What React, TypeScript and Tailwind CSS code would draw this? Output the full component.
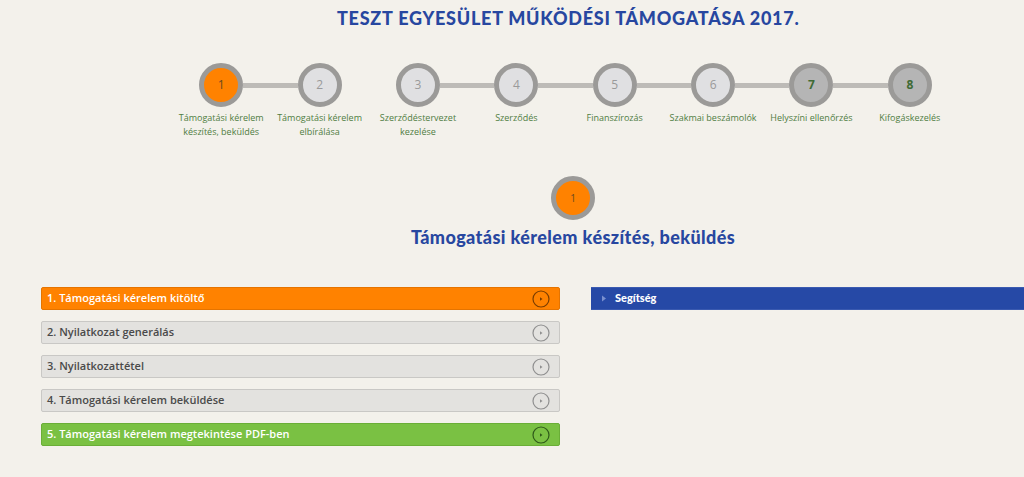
const steps = [
  { n: '1', label: ['Támogatási kérelem', 'készítés, beküldés'], kind: 'active' },
  { n: '2', label: ['Támogatási kérelem', 'elbírálása'], kind: 'light' },
  { n: '3', label: ['Szerződéstervezet', 'kezelése'], kind: 'light' },
  { n: '4', label: ['Szerződés'], kind: 'light' },
  { n: '5', label: ['Finanszírozás'], kind: 'light' },
  { n: '6', label: ['Szakmai beszámolók'], kind: 'light' },
  { n: '7', label: ['Helyszíni ellenőrzés'], kind: 'dark' },
  { n: '8', label: ['Kifogáskezelés'], kind: 'dark' },
]

// which sides carry a connector line
const leftLine = [false, true, false, true, true, true, true, true]
const rightLine = [true, false, true, true, true, true, true, false]

const items = [
  { text: '1. Támogatási kérelem kitöltő', kind: 'orange' },
  { text: '2. Nyilatkozat generálás', kind: 'gray' },
  { text: '3. Nyilatkozattétel', kind: 'gray' },
  { text: '4. Támogatási kérelem beküldése', kind: 'gray' },
  { text: '5. Támogatási kérelem megtekintése PDF-ben', kind: 'green' },
]

const heading = { fontFamily: 'Lato, "Noto Sans", sans-serif' }
const body = { fontFamily: '"Open Sans", "Noto Sans", sans-serif' }

function StepCircle({ n, kind }: { n: string; kind: string }) {
  const fill =
    kind === 'active'
      ? 'bg-[#ff8200] text-[#6b4a20]'
      : kind === 'dark'
        ? 'bg-[#b5b5b5] text-[#3f6b35] font-bold'
        : 'bg-[#e0e0e2] text-[#9a9a9a]'
  return (
    <div
      className={`w-[44px] h-[44px] shrink-0 rounded-full border-[5px] border-[#9b9a98] flex items-center justify-center text-[12px] ${fill}`}
    >
      {n}
    </div>
  )
}

function PlayIcon({ color }: { color: string }) {
  return (
    <svg width="18" height="18" viewBox="0 0 18 18">
      <circle cx="9" cy="9" r="8" fill="none" stroke={color} strokeWidth="1.2" />
      <path d="M8 7.3 L10.5 9 L8 10.7 Z" fill={color} />
    </svg>
  )
}

export default function App() {
  return (
    <div className="w-[1024px] h-[477px] overflow-hidden bg-[#f3f1eb]" style={body}>
      <h1
        className="pt-[7px] ml-[337px] text-[18px] leading-[22px] font-black text-[#2747a0] tracking-[0.75px]"
        style={heading}
      >
        TESZT EGYESÜLET MŰKÖDÉSI TÁMOGATÁSA 2017.
      </h1>

      <div className="mt-[34px] ml-[172px] w-[787px] grid grid-cols-8">
        {steps.map((s, i) => (
          <div key={s.n} className="flex flex-col items-center">
            <div className="flex items-center w-full">
              <div className={`flex-1 h-[5px] ${leftLine[i] ? 'bg-[#bdbbb7]' : ''}`} />
              <StepCircle n={s.n} kind={s.kind} />
              <div className={`flex-1 h-[5px] ${rightLine[i] ? 'bg-[#bdbbb7]' : ''}`} />
            </div>
            <div className="mt-[4px] text-center text-[9px] leading-[14px] text-[#4f7d42] whitespace-nowrap">
              {s.label.map((l) => (
                <div key={l}>{l}</div>
              ))}
            </div>
          </div>
        ))}
      </div>

      <div className="mt-[37px] flex flex-col items-center ml-[122px]">
        <div className="w-[44px] h-[44px] rounded-full border-[5px] border-[#9b9a98] bg-[#ff8200] flex items-center justify-center text-[10px] text-[#6b4a20]">
          1
        </div>
        <h2
          className="mt-[6px] text-[18px] leading-[22px] font-black text-[#2747a0] tracking-[0.4px]"
          style={heading}
        >
          Támogatási kérelem készítés, beküldés
        </h2>
      </div>

      <div className="mt-[39px] flex items-start">
        <div className="ml-[41px] w-[519px] flex flex-col gap-[11px]">
          {items.map((it) => {
            const cls =
              it.kind === 'orange'
                ? 'bg-[#ff8200] border-[#e57400] text-white'
                : it.kind === 'green'
                  ? 'bg-[#7ac143] border-[#6aae37] text-white'
                  : 'bg-[#e3e2df] border-[#c9c8c5] text-[#4a4a4a]'
            const icon =
              it.kind === 'orange' ? '#7a3d00' : it.kind === 'green' ? '#2f5a1a' : '#8f8f8f'
            return (
              <div
                key={it.text}
                className={`h-[23px] rounded-[2px] border flex items-center justify-between pl-[5px] pr-[9px] text-[11px] font-semibold ${cls}`}
              >
                <span>{it.text}</span>
                <PlayIcon color={icon} />
              </div>
            )
          })}
        </div>
        <div
          className="ml-[31px] flex-1 h-[23px] bg-[#2649a6] border-y border-[#3a5ab0] flex items-center pl-[10px] text-[11px] font-black text-white"
          style={heading}
        >
          <svg width="6" height="7" viewBox="0 0 6 7" className="mr-[8px]">
            <path d="M1 0.5 L5 3.5 L1 6.5 Z" fill="#7a90cf" />
          </svg>
          Segítség
        </div>
      </div>
    </div>
  )
}
